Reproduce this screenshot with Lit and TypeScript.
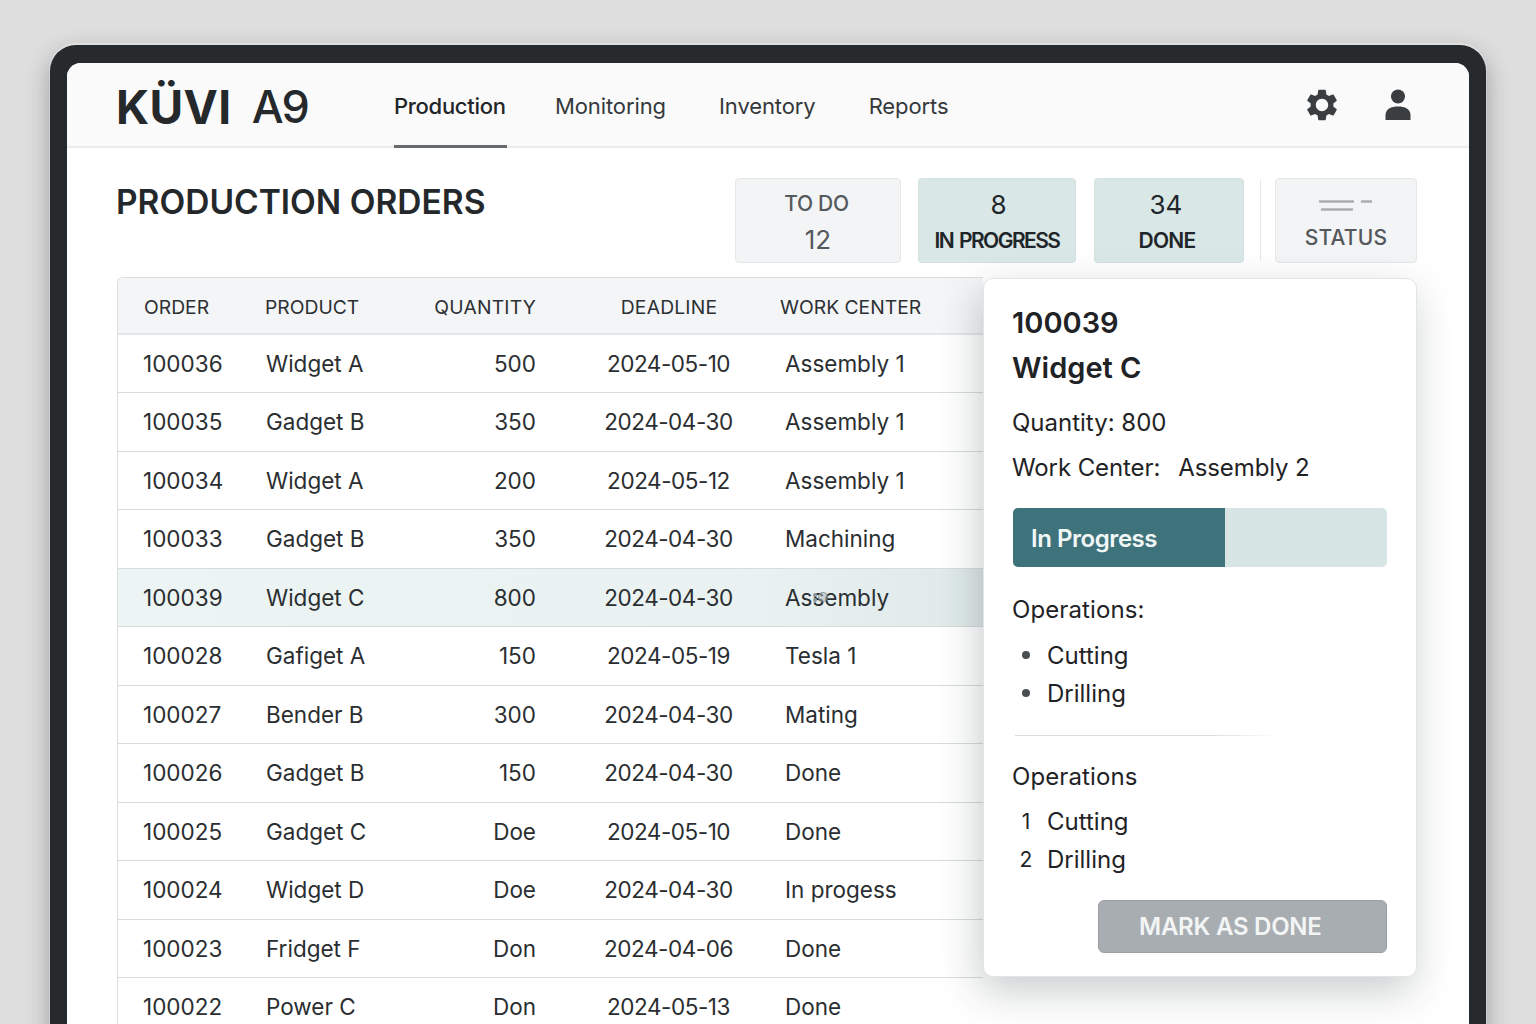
import { LitElement, html, css, svg } from "lit";
import { customElement } from "lit/decorators.js";

const rows = [
  ["100036", "Widget A", "500", "2024-05-10", "Assembly 1"],
  ["100035", "Gadget B", "350", "2024-04-30", "Assembly 1"],
  ["100034", "Widget A", "200", "2024-05-12", "Assembly 1"],
  ["100033", "Gadget B", "350", "2024-04-30", "Machining"],
  ["100039", "Widget C", "800", "2024-04-30", "Assembly"],
  ["100028", "Gafiget A", "150", "2024-05-19", "Tesla 1"],
  ["100027", "Bender B", "300", "2024-04-30", "Mating"],
  ["100026", "Gadget B", "150", "2024-04-30", "Done"],
  ["100025", "Gadget C", "Doe", "2024-05-10", "Done"],
  ["100024", "Widget D", "Doe", "2024-04-30", "In progess"],
  ["100023", "Fridget F", "Don", "2024-04-06", "Done"],
  ["100022", "Power C", "Don", "2024-05-13", "Done"],
];

const gear = svg`<path d="M19.14 12.94c.04-.3.06-.61.06-.94 0-.32-.02-.64-.07-.94l2.03-1.58a.49.49 0 0 0 .12-.61l-1.92-3.32a.488.488 0 0 0-.59-.22l-2.39.96c-.5-.38-1.03-.7-1.62-.94l-.36-2.54a.484.484 0 0 0-.48-.41h-3.84c-.24 0-.43.17-.47.41l-.36 2.54c-.59.24-1.13.57-1.62.94l-2.39-.96c-.22-.08-.47 0-.59.22L2.74 8.87c-.12.21-.08.47.12.61l2.03 1.58c-.05.3-.09.63-.09.94s.02.64.07.94l-2.03 1.58a.49.49 0 0 0-.12.61l1.92 3.32c.12.22.37.29.59.22l2.39-.96c.5.38 1.03.7 1.62.94l.36 2.54c.05.24.24.41.48.41h3.84c.24 0 .44-.17.47-.41l.36-2.54c.59-.24 1.13-.56 1.62-.94l2.39.96c.22.08.47 0 .59-.22l1.92-3.32c.12-.22.07-.47-.12-.61l-2.01-1.58zM12 15.9c-2.15 0-3.9-1.75-3.9-3.9s1.75-3.9 3.9-3.9 3.9 1.75 3.9 3.9-1.75 3.9-3.9 3.9z" fill-rule="evenodd"/>`;

@customElement("app-root")
export class AppRoot extends LitElement {
  static styles = css`
    :host {
      display: block;
      width: 1536px;
      height: 1024px;
      overflow: hidden;
      box-sizing: border-box;
      padding: 45px 50px 0;
      background: #dedede;
      font-family: Inter, "Liberation Sans", sans-serif;
      color: #25292c;
    }
    .bezel {
      height: 1100px;
      box-sizing: border-box;
      background: #262a2c;
      border-radius: 26px 26px 0 0;
      padding: 18px 17px 0;
      box-shadow: 0 8px 24px rgba(0, 0, 0, 0.3), 0 -1px 0 1px rgba(255, 255, 255, 0.45);
    }
    .screen {
      height: 100%;
      background: #fff;
      border-radius: 14px 14px 0 0;
      overflow: hidden;
    }
    header {
      height: 85px;
      box-sizing: border-box;
      background: #fafafa;
      border-bottom: 2px solid #ececec;
      display: flex;
      align-items: stretch;
      padding: 0 50px;
    }
    .logo {
      width: 278px;
      margin-left: -1px;
      display: flex;
      align-items: center;
      gap: 20px;
      font-size: 46px;
      color: #25292c;
      line-height: 1;
      padding-top: 4px;
    }
    .logo b { font-weight: 700; letter-spacing: 0.4px; }
    .logo span { font-weight: 500; font-size: 45px; letter-spacing: -2px; }
    nav { display: flex; gap: 53px; flex: 1; }
    nav a {
      font-size: 22px;
      letter-spacing: -0.1px;
      color: #34383b;
      display: flex;
      align-items: center;
      margin-bottom: -2px;
      border-bottom: 3px solid transparent;
      padding-top: 4px;
      box-sizing: border-box;
    }
    nav a.on {
      font-weight: 500;
      letter-spacing: -0.3px;
      color: #232629;
      width: 113px;
      margin-right: -5px;
      border-bottom-color: #666a6c;
    }
    .tools { display: flex; align-items: center; gap: 43px; margin-right: 7px; padding-top: 1px; }
    .tools svg { display: block; fill: #3a3e41; }
    main { padding: 30px 52px 0 50px; }
    .top { display: flex; align-items: flex-start; justify-content: space-between; }
    h1 {
      margin: 5px 0 0 -1px;
      font-size: 33.5px;
      font-weight: 600;
      line-height: 38px;
      color: #24282b;
    }
    .stats { display: flex; gap: 17px; }
    .stat {
      height: 85px;
      box-sizing: border-box;
      border: 1px solid #e6e8e8;
      border-radius: 4px;
      background: #f3f4f5;
      color: #54595d;
      display: flex;
      flex-direction: column;
      align-items: center;
      justify-content: center;
      gap: 7px;
      padding-top: 2px;
      font-size: 21px;
      font-weight: 500;
      letter-spacing: -0.6px;
      line-height: 29px;
    }
    .stat .n { font-size: 26px; font-weight: 400; letter-spacing: 0; }
    .stat.teal { background: #d9e7e7; border-color: #d3e1e1; color: #1f2528; padding-top: 4px; }
    .w1 { width: 166px; }
    .w2 { width: 158px; margin-right: 1px; }
    .w3 { width: 150px; }
    .w4 { width: 142px; gap: 10px; padding-top: 8px; }
    .s-td { letter-spacing: -0.3px; margin-right: 3px; }
    .s-ip { font-weight: 600; letter-spacing: -1.55px; word-spacing: 2px; }
    .s-d { font-weight: 600; letter-spacing: -0.8px; margin-right: 4px; }
    .s-st { letter-spacing: 0.2px; font-weight: 500; color: #54585b; }
    .n8 { margin-left: 3px; }
    .n34 { margin-right: 6px; }
    .sep { width: 1px; height: 81px; margin: 2px -3px 0 -1px; background: #e6e8e8; }
    .stat svg { display: block; }
    .wrap { position: relative; margin-top: 14px; }
    .table {
      width: 866px;
      border: 1px solid #dcdfe0;
      border-right: 0;
      border-bottom: 0;
      border-radius: 6px 0 0 0;
      box-sizing: border-box;
      overflow: hidden;
    }
    .row, .head {
      display: grid;
      grid-template-columns: 122px 160px 111px 54px 158px 37px 1fr;
      padding-left: 25px;
      align-items: center;
    }
    .head {
      height: 56.5px;
      box-sizing: border-box;
      background: #f4f5f6;
      border-bottom: 2px solid #e4e6e7;
      font-size: 19.3px;
      font-weight: 400;
      color: #2c3033;
      padding-top: 3px;
    }
    .head .num, .head .date { letter-spacing: 0.2px; }
    .row {
      height: 58.5px;
      box-sizing: border-box;
      border-bottom: 1px solid #d9dcdd;
      font-size: 22.5px;
      color: #2a2e31;
    }
    .row > span:nth-child(2) { padding-left: 1px; }
    .row.sel { background: linear-gradient(90deg, #edf4f4 0%, #e9f1f1 75%, #dfe9e9 100%); }
    .num { text-align: right; grid-column: 3; }
    .date { text-align: center; grid-column: 5; }
    .row .date { letter-spacing: -0.45px; padding-right: 1px; }
    .wc { grid-column: 7; white-space: nowrap; }
    .head .wc { margin-left: -5px; }
    .head .ord { padding-left: 1px; }
    .cursor { position: relative; }
    .cursor i {
      position: absolute;
      left: 33px;
      top: 8px;
      width: 8px;
      height: 8px;
      border: 1px solid rgba(120, 130, 130, 0.7);
      border-radius: 50%;
      background: rgba(170, 180, 180, 0.5);
    }
    .cursor i::before {
      content: "";
      position: absolute;
      left: -6px;
      top: 0;
      width: 4px;
      height: 4px;
      border-radius: 50%;
      background: #8d9797;
      box-shadow: 0 5px 0 #8d9797;
    }
    .panel {
      position: absolute;
      left: 866px;
      top: 1px;
      width: 434px;
      height: 699px;
      box-sizing: border-box;
      background: #fff;
      border: 1px solid #e2e4e5;
      border-radius: 10px;
      padding: 24px 29px 0 28px;
      box-shadow: -4px 14px 40px rgba(30, 40, 45, 0.24);
      font-size: 24px;
      color: #1f2326;
      display: flex;
      flex-direction: column;
    }
    .panel h2 {
      margin: 0;
      font-size: 29px;
      font-weight: 600;
      line-height: 40px;
      color: #1f2326;
    }
    .panel h2 + h2 { margin-top: 5px; }
    .panel p { margin: 0; line-height: 30px; }
    .qty { margin-top: 20px !important; }
    .wcl { margin-top: 15px !important; display: flex; gap: 18px; letter-spacing: -0.1px; }
    .bar {
      margin: 25px 0 0 1px;
      height: 59px;
      border-radius: 5px;
      background: #d7e5e4;
      overflow: hidden;
      display: flex;
    }
    .fill {
      width: 212px;
      background: #3f737c;
      color: #f1f7f7;
      font-weight: 600;
      letter-spacing: -0.45px;
      display: flex;
      align-items: center;
      padding: 2px 0 0 18px;
      box-sizing: border-box;
    }
    .ops { margin-top: 28px !important; letter-spacing: 0.1px; }
    ul { list-style: none; margin: 11px 0 0; padding: 0; }
    .l2 { margin-top: 10px; }
    li { display: flex; align-items: center; height: 38px; }
    li .mk { width: 35px; display: flex; justify-content: center; padding-right: 7px; box-sizing: border-box; font-size: 21px; }
    li .dot { width: 8px; height: 8px; border-radius: 50%; background: #4a4f52; }
    .rule {
      margin: 23px 0 0 3px;
      width: 265px;
      height: 1px;
      background: linear-gradient(90deg, #dcdfe0 0%, #dcdfe0 75%, rgba(226,228,229,0) 100%);
    }
    .ops2 { margin-top: 26px !important; letter-spacing: 0.1px; }
    button {
      align-self: flex-end;
      margin-top: 22px;
      width: 289px;
      height: 53px;
      box-sizing: border-box;
      border: 1px solid #9b9fa4;
      border-radius: 6px;
      background: #a8adb2;
      color: #f3f5f5;
      font: 600 24px Inter, "Liberation Sans", sans-serif;
      letter-spacing: -0.25px;
      text-align: left;
      padding: 0 0 0 40px;
    }
  `;

  render() {
    return html`
      <div class="bezel">
        <div class="screen">
          <header>
            <div class="logo"><b>KÜVI</b><span>A9</span></div>
            <nav>
              <a class="on">Production</a>
              <a>Monitoring</a>
              <a>Inventory</a>
              <a>Reports</a>
            </nav>
            <div class="tools">
              <svg width="38" height="38" viewBox="0 0 24 24">${gear}</svg>
              <svg width="28" height="34" viewBox="0 0 28 34">
                <circle cx="14" cy="8.5" r="7"></circle>
                <path d="M1.5 32 V27 C1.5 21 7 18.5 14 18.5 S26.5 21 26.5 27 V32 Z"></path>
              </svg>
            </div>
          </header>
          <main>
            <div class="top">
              <h1>PRODUCTION ORDERS</h1>
              <div class="stats">
                <div class="stat w1"><span class="s-td">TO DO</span><span class="n">12</span></div>
                <div class="stat teal w2"><span class="n n8">8</span><span class="s-ip">IN PROGRESS</span></div>
                <div class="stat teal w3"><span class="n n34">34</span><span class="s-d">DONE</span></div>
                <div class="sep"></div>
                <div class="stat w4">
                  <svg width="56" height="16" viewBox="0 0 56 16">
                    <path d="M1 4.5H36M3 12.5H35M43 4.5H54" stroke="#a9adb0" stroke-width="2.4" fill="none"></path>
                  </svg>
                  <span class="s-st">STATUS</span>
                </div>
              </div>
            </div>
            <div class="wrap">
              <div class="table">
                <div class="head">
                  <span class="ord">ORDER</span><span>PRODUCT</span><span class="num">QUANTITY</span>
                  <span class="date">DEADLINE</span><span class="wc">WORK CENTER</span>
                </div>
                ${rows.map(
                  (r) => html`<div class="row ${r[0] === "100039" ? "sel" : ""}">
                    <span>${r[0]}</span><span>${r[1]}</span><span class="num">${r[2]}</span>
                    <span class="date">${r[3]}</span>
                    <span class="wc ${r[0] === "100039" ? "cursor" : ""}">${r[4]}${r[0] === "100039" ? html`<i></i>` : ""}</span>
                  </div>`
                )}
              </div>
              <aside class="panel">
                <h2>100039</h2>
                <h2>Widget C</h2>
                <p class="qty">Quantity: 800</p>
                <p class="wcl"><span>Work Center:</span><span>Assembly 2</span></p>
                <div class="bar"><div class="fill">In Progress</div></div>
                <p class="ops">Operations:</p>
                <ul>
                  <li><span class="mk"><span class="dot"></span></span>Cutting</li>
                  <li><span class="mk"><span class="dot"></span></span>Drilling</li>
                </ul>
                <div class="rule"></div>
                <p class="ops2">Operations</p>
                <ul class="l2">
                  <li><span class="mk">1</span>Cutting</li>
                  <li><span class="mk">2</span>Drilling</li>
                </ul>
                <button>MARK AS DONE</button>
              </aside>
            </div>
          </main>
        </div>
      </div>
    `;
  }
}
